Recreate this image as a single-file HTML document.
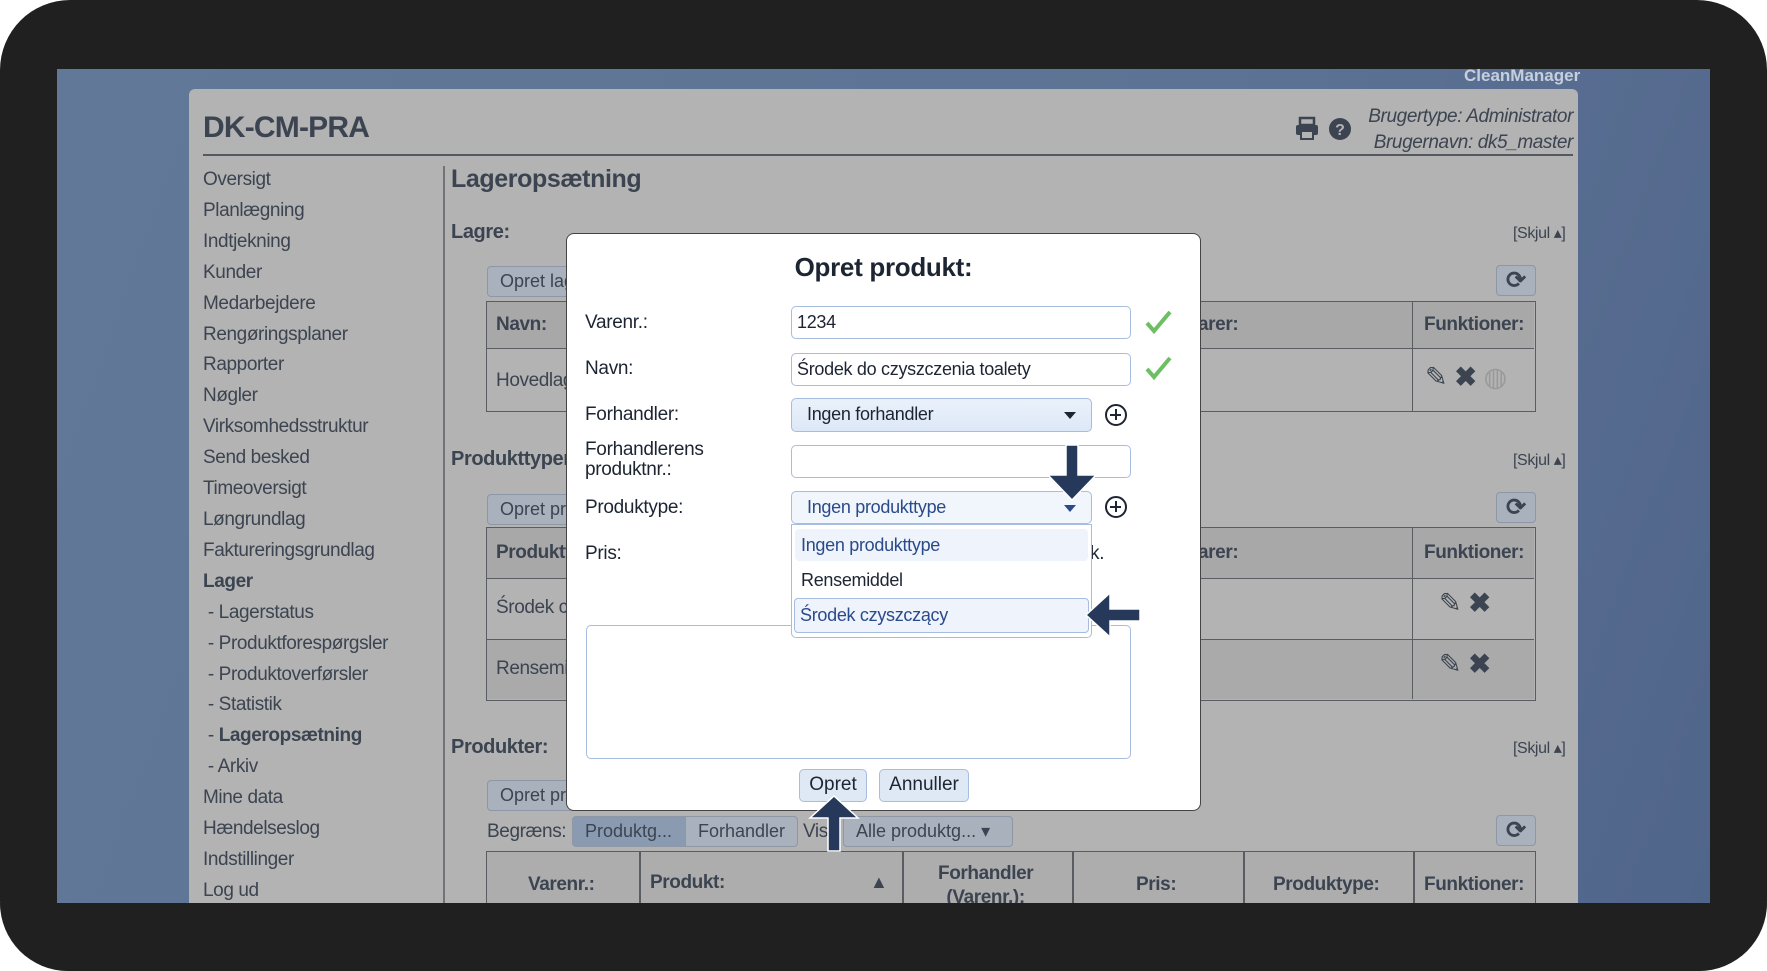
<!DOCTYPE html>
<html><head><meta charset="utf-8"><style>
*{box-sizing:border-box;margin:0;padding:0}
body{width:1767px;height:971px;background:#fff;position:relative;overflow:hidden;font-family:"Liberation Sans",sans-serif;}
.a{position:absolute}
.frame{left:0;top:0;width:1767px;height:971px;background:#212021;border-radius:70px}
.screen{left:57px;top:69px;width:1653px;height:834px;background:linear-gradient(110deg,#627898 0%,#5d7395 60%,#50658a 100%)}
.panel{left:189px;top:89px;width:1389px;height:814px;background:#b3b3b3;border-radius:6px 6px 0 0}
.t{color:#3b4450;font-size:19px;letter-spacing:-0.4px;white-space:nowrap}
.b{font-weight:bold}
.btn{background:#a9b1bd;border:1px solid #8d97a5;border-radius:4px;color:#3b4450;font-size:18px;padding:0 12px;line-height:29px;height:31px;white-space:nowrap;overflow:hidden}
.tbl{border:1.5px solid #595c60}
.cell{border-right:1.5px solid #595c60;border-bottom:1.5px solid #595c60}
.modal{left:566px;top:233px;width:635px;height:578px;background:#fff;border-radius:8px;border:1px solid #444}
.m{color:#1d2533;font-size:19px;letter-spacing:-0.3px;white-space:nowrap}
.inp{background:#fff;border:1.5px solid #a7bde0;border-radius:5px}
.sel{background:linear-gradient(#eaf1fb,#dde8f7);border:1.5px solid #a7bde0;border-radius:5px}
.mbtn{background:#dfe8f5;border:1.5px solid #a7bde0;border-radius:5px;color:#1d2533;font-size:19px;text-align:center;line-height:29px}
.plus{width:22px;height:22px;border:2.5px solid #1d2533;border-radius:50%;}
.plus:before{content:"";position:absolute;left:3px;top:7.5px;width:11px;height:2.5px;background:#1d2533}
.plus:after{content:"";position:absolute;left:7.5px;top:3px;width:2.5px;height:11px;background:#1d2533}
.sk{font-size:16px}
</style></head><body>
<div class="a frame"></div>
<div class="a screen"></div>
<div class="a" style="left:1464px;top:66px;color:#c6cfdb;font-weight:bold;font-size:17px">CleanManager</div>
<div class="a panel"></div>
<div class="a t b" style="left:203px;top:111px;font-size:30px;letter-spacing:-0.8px">DK-CM-PRA</div>
<div class="a" style="left:203px;top:154px;width:1370px;height:1.5px;background:#555a60"></div>
<svg class="a" style="left:1295px;top:116px" width="60" height="26" viewBox="0 0 60 26">
<rect x="5" y="2" width="14" height="7" fill="none" stroke="#3b4450" stroke-width="2.5"/>
<rect x="1" y="9" width="22" height="10" rx="2" fill="#3b4450"/>
<rect x="6" y="15" width="12" height="8" fill="#b3b3b3" stroke="#3b4450" stroke-width="2"/>
<circle cx="45" cy="13" r="11" fill="#3b4450"/>
<text x="45" y="19" text-anchor="middle" font-family="Liberation Sans" font-weight="bold" font-size="16" fill="#b3b3b3">?</text>
</svg>
<div class="a t" style="right:194px;top:104px;font-style:italic;font-size:19px;text-align:right;line-height:26px">Brugertype: Administrator<br>Brugernavn: dk5_master</div>
<div class="a t" style="left:203px;top:165px;line-height:30.9px">
Oversigt<br>Planlægning<br>Indtjekning<br>Kunder<br>Medarbejdere<br>Rengøringsplaner<br>Rapporter<br>Nøgler<br>Virksomhedsstruktur<br>Send besked<br>Timeoversigt<br>Løngrundlag<br>Faktureringsgrundlag<br><b>Lager</b><br>&nbsp;- Lagerstatus<br>&nbsp;- Produktforespørgsler<br>&nbsp;- Produktoverførsler<br>&nbsp;- Statistik<br>&nbsp;- <b>Lageropsætning</b><br>&nbsp;- Arkiv<br>Mine data<br>Hændelseslog<br>Indstillinger<br>Log ud</div>
<div class="a" style="left:443px;top:166px;width:1.5px;height:737px;background:#707378"></div>
<div class="a t b" style="left:451px;top:165px;font-size:25px">Lageropsætning</div>
<div class="a t b" style="left:451px;top:221px;font-size:20px">Lagre:</div>
<div class="a t sk" style="left:1513px;top:223px">[Skjul ▴]</div>
<div class="a btn" style="left:487px;top:266px;width:100px">Opret lager</div>
<div class="a btn" style="left:1496px;top:265px;width:40px;text-align:center;padding:0;font-size:24px;font-weight:bold">⟳</div>
<div class="a tbl" style="left:486px;top:301px;width:1050px;height:111px">
 <div class="a cell" style="left:0;top:0;width:926px;height:47px;background:#a8a8a8"></div>
 <div class="a" style="left:926px;top:0;width:121px;height:47px;border-bottom:1.5px solid #595c60;background:#a8a8a8"></div>
 <div class="a cell" style="left:0;top:47px;width:926px;height:62px;border-bottom:none"></div>
</div>
<div class="a t b" style="left:496px;top:314px">Navn:</div>
<div class="a t b" style="left:1198px;top:314px">arer:</div>
<div class="a t b" style="left:1424px;top:314px">Funktioner:</div>
<div class="a t" style="left:496px;top:370px">Hovedlager</div>
<div class="a t" style="left:1425px;top:362px;font-size:27px">✎ <b>✖</b> <span style="color:#999">◍</span></div>
<div class="a t b" style="left:451px;top:448px;font-size:20px">Produkttyper:</div>
<div class="a t sk" style="left:1513px;top:450px">[Skjul ▴]</div>
<div class="a btn" style="left:487px;top:494px;width:100px">Opret produkttype</div>
<div class="a btn" style="left:1496px;top:492px;width:40px;text-align:center;padding:0;font-size:24px;font-weight:bold">⟳</div>
<div class="a tbl" style="left:486px;top:527px;width:1050px;height:174px">
 <div class="a cell" style="left:0;top:0;width:926px;height:51px;background:#a8a8a8"></div>
 <div class="a" style="left:926px;top:0;width:121px;height:51px;border-bottom:1.5px solid #595c60;background:#a8a8a8"></div>
 <div class="a cell" style="left:0;top:51px;width:926px;height:61px"></div>
 <div class="a" style="left:926px;top:51px;width:121px;height:61px;border-bottom:1.5px solid #595c60"></div>
 <div class="a cell" style="left:0;top:112px;width:926px;height:59px;border-bottom:none;background:#aaaaaa"></div>
 <div class="a" style="left:926px;top:112px;width:121px;height:59px;background:#aaaaaa"></div>
</div>
<div class="a t b" style="left:496px;top:542px">Produkttype:</div>
<div class="a t b" style="left:1198px;top:542px">arer:</div>
<div class="a t b" style="left:1424px;top:542px">Funktioner:</div>
<div class="a t" style="left:496px;top:597px">Środek czyszczący</div>
<div class="a t" style="left:496px;top:658px">Rensemiddel</div>
<div class="a t" style="left:1439px;top:588px;font-size:27px">✎ <b>✖</b></div>
<div class="a t" style="left:1439px;top:649px;font-size:27px">✎ <b>✖</b></div>
<div class="a t b" style="left:451px;top:736px;font-size:20px">Produkter:</div>
<div class="a t sk" style="left:1513px;top:738px">[Skjul ▴]</div>
<div class="a btn" style="left:487px;top:780px;width:100px">Opret produkt</div>
<div class="a t" style="left:487px;top:821px">Begræns:</div>
<div class="a btn" style="left:572px;top:816px;width:114px;background:#8a9ab1;border-radius:4px 0 0 4px">Produktg...</div>
<div class="a btn" style="left:685px;top:816px;width:113px;border-radius:0 4px 4px 0">Forhandler</div>
<div class="a t" style="left:803px;top:821px">Vis</div>
<div class="a btn" style="left:843px;top:816px;width:170px">Alle produktg... ▾</div>
<div class="a btn" style="left:1496px;top:815px;width:40px;text-align:center;padding:0;font-size:24px;font-weight:bold">⟳</div>
<div class="a" style="left:486px;top:851px;width:1050px;height:52px;border:1.5px solid #595c60;border-bottom:none;background:#adadad"></div>
<div class="a" style="left:639px;top:851px;width:1.5px;height:52px;background:#595c60"></div>
<div class="a" style="left:902px;top:851px;width:1.5px;height:52px;background:#595c60"></div>
<div class="a" style="left:1072px;top:851px;width:1.5px;height:52px;background:#595c60"></div>
<div class="a" style="left:1243px;top:851px;width:1.5px;height:52px;background:#595c60"></div>
<div class="a" style="left:1413px;top:851px;width:1.5px;height:52px;background:#595c60"></div>
<div class="a t b" style="left:528px;top:874px">Varenr.:</div>
<div class="a t b" style="left:650px;top:872px">Produkt:</div>
<div class="a t" style="left:870px;top:872px;font-size:18px">▲</div>
<div class="a t b" style="left:938px;top:862px;text-align:center;line-height:24px">Forhandler<br>(Varenr.):</div>
<div class="a t b" style="left:1136px;top:874px">Pris:</div>
<div class="a t b" style="left:1273px;top:874px">Produktype:</div>
<div class="a t b" style="left:1424px;top:874px">Funktioner:</div>
<div class="a" style="left:0;top:903px;width:1767px;height:68px;background:#212021;border-radius:0 0 70px 70px"></div>
<div class="a modal"></div>
<div class="a m b" style="left:566px;width:635px;text-align:center;top:252px;font-size:26px">Opret produkt:</div>
<div class="a m" style="left:585px;top:312px">Varenr.:</div>
<div class="a inp" style="left:791px;top:306px;width:340px;height:33px"></div>
<div class="a m" style="left:797px;top:312px;font-size:18px">1234</div>
<div class="a m" style="left:585px;top:358px">Navn:</div>
<div class="a inp" style="left:791px;top:353px;width:340px;height:33px"></div>
<div class="a m" style="left:797px;top:359px;font-size:18px">Środek do czyszczenia toalety</div>
<svg class="a" style="left:1145px;top:309px" width="28" height="80" viewBox="0 0 28 80"><path d="M2 14 L9 22 L25 3" fill="none" stroke="#6cbf62" stroke-width="4"/><path d="M2 60 L9 68 L25 49" fill="none" stroke="#6cbf62" stroke-width="4"/></svg>
<div class="a m" style="left:585px;top:404px">Forhandler:</div>
<div class="a sel" style="left:791px;top:398px;width:301px;height:34px"></div>
<div class="a m" style="left:807px;top:404px;font-size:18px">Ingen forhandler</div>
<div class="a" style="left:1064px;top:412px;border:6px solid transparent;border-top:7px solid #1d2533;border-bottom:none"></div>
<div class="a plus" style="left:1105px;top:404px"></div>
<div class="a m" style="left:585px;top:440px;line-height:20px">Forhandlerens<br>produktnr.:</div>
<div class="a inp" style="left:791px;top:445px;width:340px;height:33px"></div>
<div class="a m" style="left:585px;top:497px">Produktype:</div>
<div class="a sel" style="left:791px;top:491px;width:301px;height:33px;background:#f1f6fd"></div>
<div class="a m" style="left:807px;top:497px;font-size:18px;color:#2b4a8a">Ingen produkttype</div>
<div class="a" style="left:1064px;top:505px;border:6px solid transparent;border-top:7px solid #2b4a8a;border-bottom:none"></div>
<div class="a plus" style="left:1105px;top:496px"></div>
<div class="a m" style="left:585px;top:543px">Pris:</div>
<div class="a m" style="left:1090px;top:543px">k.</div>
<div class="a inp" style="left:586px;top:625px;width:545px;height:134px"></div>
<div class="a" style="left:791px;top:524px;width:301px;height:114px;background:#fff;border:1.5px solid #a7bde0;border-radius:0 0 5px 5px"></div>
<div class="a" style="left:795px;top:529px;width:293px;height:32px;background:#eef3fc;border-radius:4px"></div>
<div class="a m" style="left:801px;top:535px;font-size:18px;color:#2b4a8a">Ingen produkttype</div>
<div class="a m" style="left:801px;top:570px;font-size:18px">Rensemiddel</div>
<div class="a" style="left:794px;top:598px;width:295px;height:35px;background:#eef3fc;border:1.5px solid #a7bde0;border-radius:4px"></div>
<div class="a m" style="left:800px;top:605px;font-size:18px;color:#2b4a8a">Środek czyszczący</div>
<div class="a mbtn" style="left:799px;top:769px;width:68px;height:33px">Opret</div>
<div class="a mbtn" style="left:879px;top:769px;width:90px;height:33px">Annuller</div>
<svg class="a" style="left:0;top:0" width="1767" height="971" viewBox="0 0 1767 971">
<path d="M1066 445 H1078 V475 H1096 L1072 500 L1048 475 H1066 Z" fill="#26395a" stroke="#fff" stroke-width="1.5"/>
<path d="M1086 615 L1110 593 V609 H1140 V621 H1110 V637 Z" fill="#26395a" stroke="#fff" stroke-width="1.5"/>
<path d="M834 796 L858 818 H840 V851 H828 V818 H810 Z" fill="#26395a" stroke="#fff" stroke-width="1.5"/>
</svg>
</body></html>
